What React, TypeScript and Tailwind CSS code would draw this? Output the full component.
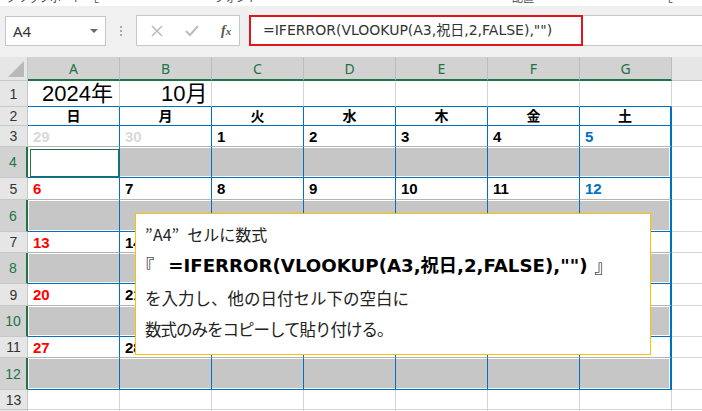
import React from 'react';

const COLS = ['A', 'B', 'C', 'D', 'E', 'F', 'G'];
const DOW = ['日', '月', '火', '水', '木', '金', '土'];

type RowKind = 'title' | 'dow' | 'date' | 'sel' | 'plain';
type RowDef = { n: number; h: string; kind: RowKind; dates?: [number, boolean][] };

const mk = (start: number, len = 7): [number, boolean][] =>
  Array.from({ length: len }, (_, i) => [start + i, true] as [number, boolean]);

const ROWS: RowDef[] = [
  { n: 1, h: 'h-[26px]', kind: 'title' },
  { n: 2, h: 'h-[19px]', kind: 'dow' },
  { n: 3, h: 'h-[21px]', kind: 'date', dates: [[29, false], [30, false], [1, true], [2, true], [3, true], [4, true], [5, true]] },
  { n: 4, h: 'h-[31px]', kind: 'sel' },
  { n: 5, h: 'h-[22px]', kind: 'date', dates: mk(6) },
  { n: 6, h: 'h-[32px]', kind: 'sel' },
  { n: 7, h: 'h-[21px]', kind: 'date', dates: mk(13) },
  { n: 8, h: 'h-[31px]', kind: 'sel' },
  { n: 9, h: 'h-[22px]', kind: 'date', dates: mk(20) },
  { n: 10, h: 'h-[31px]', kind: 'sel' },
  { n: 11, h: 'h-[21px]', kind: 'date', dates: [[27, true], [28, true], [29, true], [30, true], [31, true], [1, false], [2, false]] },
  { n: 12, h: 'h-[32px]', kind: 'sel' },
  { n: 13, h: 'h-[20px]', kind: 'plain' },
  { n: 14, h: 'h-[20px]', kind: 'plain' },
];

function cellBorder(r: RowDef, c: number): string {
  const inTable = r.kind === 'dow' || r.kind === 'date' || r.kind === 'sel';
  const right = inTable
    ? c === 6
      ? 'border-r-2 border-r-[#0070c0]'
      : 'border-r border-r-[#0070c0]'
    : 'border-r border-r-[#d4d4d4]';
  let bottom = 'border-b border-b-[#d4d4d4]';
  if (r.kind === 'title' || r.kind === 'dow' || r.kind === 'sel') bottom = 'border-b border-b-[#0070c0]';
  else if (r.kind === 'date') bottom = 'border-b border-b-[#b4b4b4]';
  return right + ' ' + bottom;
}

function dateColor(c: number, inMonth: boolean): string {
  if (!inMonth) return 'text-[#d9d9d9]';
  if (c === 0) return 'text-[#ff0000]';
  if (c === 6) return 'text-[#0070c0]';
  return 'text-black';
}

function Cell({ r, c }: { r: RowDef; c: number }) {
  const base = 'box-border w-[92px] shrink-0 ' + cellBorder(r, c);
  if (r.kind === 'title') {
    if (c === 0)
      return (
        <div className={base + ' pl-[14px] text-[22px] leading-[26px] text-black'}>2024年</div>
      );
    if (c === 1)
      return (
        <div className={base + ' pl-[41px] text-[22px] leading-[26px] text-black'}>10月</div>
      );
    return <div className={base} />;
  }
  if (r.kind === 'dow') {
    return (
      <div className={base + ' flex items-center justify-center text-[14px] font-bold text-black'}>
        {DOW[c]}
      </div>
    );
  }
  if (r.kind === 'date' && r.dates) {
    const [d, inMonth] = r.dates[c];
    return (
      <div className={base + ' pl-[5px] text-[15px] font-bold leading-[21px] ' + dateColor(c, inMonth)}>
        {d}
      </div>
    );
  }
  if (r.kind === 'sel') {
    if (r.n === 4 && c === 0) {
      return (
        <div className={base + ' pt-[2px] pl-[2px]'}>
          <div className="h-full border border-[#217346] bg-white" />
        </div>
      );
    }
    const pad = c === 0 ? 'py-px pl-px' : c === 6 ? 'py-px pr-px' : 'py-px';
    return (
      <div className={base + ' ' + pad}>
        <div className="h-full bg-[#c6c6c6]" />
      </div>
    );
  }
  return <div className={base} />;
}

function RowHeader({ r }: { r: RowDef }) {
  const sel = r.kind === 'sel';
  return (
    <div
      className={
        'box-border flex w-[28px] shrink-0 items-center justify-center border-b border-b-[#c8c8c8] text-[14px] leading-none ' +
        (sel
          ? 'border-r-2 border-r-[#217346] bg-[#d2d2d2] text-[#217346]'
          : 'border-r border-r-[#c8c8c8] bg-[#e6e6e6] text-[#333]')
      }
    >
      {r.n}
    </div>
  );
}

export default function App() {
  return (
    <div
      className="relative h-[411px] w-[702px] overflow-hidden bg-white"
      style={{ fontFamily: '"Liberation Sans", "Noto Sans CJK JP", sans-serif' }}
    >
      {/* ribbon remnant */}
      <div className="relative h-[6px] overflow-hidden bg-white text-[11px] text-[#444]">
        <span className="absolute left-[6px] top-[-10px]">クリップボード</span>
        <span className="absolute left-[94px] top-[-10px]">⌞</span>
        <span className="absolute left-[214px] top-[-10px]">フォント</span>
        <span className="absolute left-[512px] top-[-10px]">配置</span>
        <span className="absolute left-[668px] top-[-10px]">⌞</span>
      </div>

      {/* formula toolbar */}
      <div className="flex h-[51px] items-start bg-[#f0f0f0] pt-[9px]">
        <div className="ml-[5px] mt-px flex h-[30px] w-[101px] items-center justify-between border border-[#c6c6c6] bg-white pl-[7px] pr-[6px]">
          <span
            className="text-[15px] text-[#333]"
            style={{ fontFamily: '"Noto Sans", sans-serif' }}
          >
            A4
          </span>
          <svg width="10" height="6" viewBox="0 0 10 6">
            <path d="M1 1 L9 1 L5 5 Z" fill="#6b6b6b" />
          </svg>
        </div>
        <div className="flex h-[31px] w-[30px] flex-col items-center justify-center gap-[2px]">
          <span className="h-[2px] w-[2px] bg-[#a8a8a8]" />
          <span className="h-[2px] w-[2px] bg-[#a8a8a8]" />
          <span className="h-[2px] w-[2px] bg-[#a8a8a8]" />
        </div>
        <div className="flex h-[31px] w-[104px] items-center border border-[#c6c6c6] bg-white">
          <svg className="ml-[14px]" width="12" height="12" viewBox="0 0 12 12">
            <path d="M1 1 L11 11 M11 1 L1 11" stroke="#bdbdbd" strokeWidth="1.6" />
          </svg>
          <svg className="ml-[22px]" width="14" height="12" viewBox="0 0 14 12">
            <path d="M1 6 L5 10 L13 1" stroke="#bdbdbd" strokeWidth="2" fill="none" />
          </svg>
          <span
            className="ml-[22px] text-[14px] italic font-bold text-[#555]"
            style={{ fontFamily: '"Liberation Serif", serif' }}
          >
            f<span className="text-[11px]">x</span>
          </span>
        </div>
        <div className="ml-[9px] flex h-[31px] flex-1 border-y border-[#c6c6c6] bg-white">
          <div className="-my-px flex h-[31px] w-[334px] items-center border-2 border-[#e3141f] pl-[12px]">
            <span
              className="whitespace-nowrap text-[14px] text-[#333]"
              style={{ fontFamily: '"DejaVu Sans", "Noto Sans CJK JP", sans-serif' }}
            >
              =IFERROR(VLOOKUP(A3,祝日,2,FALSE),"")
            </span>
          </div>
        </div>
      </div>

      {/* column headers */}
      <div className="flex h-[24px]">
        <div className="relative box-border w-[28px] shrink-0 border-b border-r border-[#c8c8c8] bg-[#e6e6e6]">
          <svg className="absolute bottom-[3px] right-[3px]" width="16" height="16" viewBox="0 0 16 16">
            <path d="M16 0 L16 16 L0 16 Z" fill="#b9b9b9" />
          </svg>
        </div>
        {COLS.map((c) => (
          <div
            key={c}
            className="box-border flex w-[92px] shrink-0 items-center justify-center border-b-2 border-r border-b-[#217346] border-r-[#bdbdbd] bg-[#d2d2d2] text-[14px] text-[#217346]"
            style={{ fontFamily: '"Noto Sans", sans-serif' }}
          >
            {c}
          </div>
        ))}
        <div className="box-border flex-1 border-b border-[#c8c8c8] bg-[#e6e6e6]" />
      </div>

      {/* grid body */}
      <div className="relative">
        {ROWS.map((r) => (
          <div key={r.n} className={'flex ' + r.h}>
            <RowHeader r={r} />
            {COLS.map((_, ci) => (
              <Cell key={ci} r={r} c={ci} />
            ))}
            <div className="box-border flex-1 border-b border-b-[#d4d4d4]" />
          </div>
        ))}

        {/* callout */}
        <div className="absolute left-[135px] top-[132px] box-border h-[142px] w-[516px] border border-[#ffc000] bg-white pl-[9px] pt-[4px] text-[#222]">
          <div
            className="flex h-[32px] items-center whitespace-nowrap text-[16px]"
            style={{ fontFamily: '"Noto Sans CJK JP", sans-serif' }}
          >
            <span className="inline-block w-[8px] text-left">”</span>
            <span>A4</span>
            <span>”</span>
            <span className="ml-[8px]">セルに数式</span>
          </div>
          <div
            className="flex h-[32px] items-center whitespace-nowrap text-[18.2px] font-bold text-black"
            style={{ fontFamily: '"DejaVu Sans", "Noto Sans CJK JP", sans-serif' }}
          >
            <span
              style={{ fontFamily: '"Noto Sans CJK JP", sans-serif' }}
              className="relative -left-[9px] font-normal"
            >
              『
            </span>
            <span className="ml-[5px]">=IFERROR(VLOOKUP(A3,祝日,2,FALSE),"")</span>
            <span style={{ fontFamily: '"Noto Sans CJK JP", sans-serif' }} className="ml-[7px] font-normal">』</span>
          </div>
          <div
            className="flex h-[32px] items-center whitespace-nowrap text-[16.5px]"
            style={{ fontFamily: '"Noto Sans CJK JP", sans-serif' }}
          >
            を入力し、他の日付セル下の空白に
          </div>
          <div
            className="flex h-[30px] items-center whitespace-nowrap text-[16.5px] tracking-[-1px]"
            style={{ fontFamily: '"Noto Sans CJK JP", sans-serif' }}
          >
            数式のみをコピーして貼り付ける。
          </div>
        </div>
      </div>
    </div>
  );
}
